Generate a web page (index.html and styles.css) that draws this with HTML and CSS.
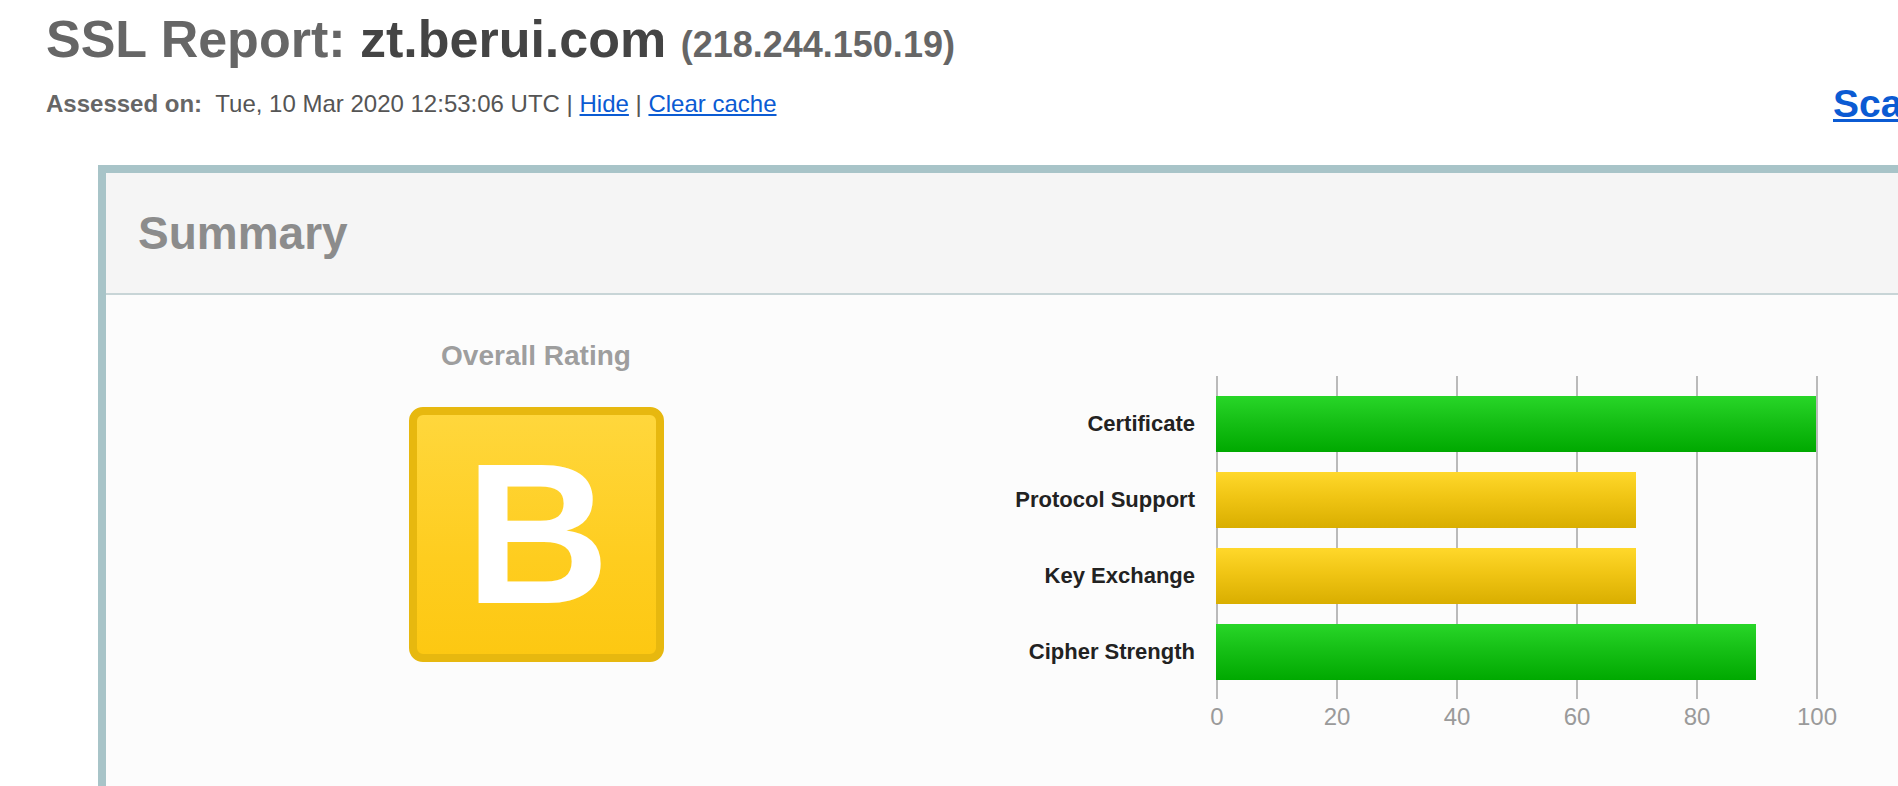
FILE: index.html
```html
<!DOCTYPE html>
<html lang="en">
<head>
<meta charset="utf-8">
<title>SSL Report: zt.berui.com</title>
<link rel="stylesheet" href="styles.css">
</head>
<body>
<div class="page">
  <h1 class="title"><span class="title-label">SSL Report:</span> <span class="host">zt.berui.com</span> <span class="ip">(218.244.150.19)</span></h1>
  <div class="meta-row">
    <div class="assessed"><b class="assessed-label">Assessed on:</b> Tue, 10 Mar 2020 12:53:06 UTC | <a href="#">Hide</a> | <a href="#">Clear cache</a></div>
    <a class="scan" href="#">Scan Another &raquo;</a>
  </div>
  <section class="report">
    <div class="report-head"><h2 class="report-title">Summary</h2></div>
    <div class="report-body">
      <div class="rating">
        <div class="rating-title">Overall Rating</div>
        <div class="grade"><span class="grade-letter">B</span></div>
      </div>
      <div class="chart">
        <div class="chart-labels">
          <div class="chart-label">Certificate</div>
          <div class="chart-label">Protocol Support</div>
          <div class="chart-label">Key Exchange</div>
          <div class="chart-label">Cipher Strength</div>
        </div>
        <div class="chart-area">
          <div class="plot">
            <div class="bars">
              <div class="bar bar-green" style="width:100%"></div>
              <div class="bar bar-yellow" style="width:70%"></div>
              <div class="bar bar-yellow" style="width:70%"></div>
              <div class="bar bar-green" style="width:90%"></div>
            </div>
          </div>
          <div class="axis">
            <span>0</span><span>20</span><span>40</span><span>60</span><span>80</span><span>100</span>
          </div>
        </div>
      </div>
    </div>
  </section>
</div>
</body>
</html>
```

FILE: styles.css
```css
html, body {
  margin: 0;
  padding: 0;
  background: #ffffff;
  overflow: hidden;
}

body {
  font-family: "Liberation Sans", Arial, Helvetica, sans-serif;
  color: #555555;
}

.page {
  padding: 10px 0 0 46px;
  width: 2200px;
}

.title {
  margin: 0;
  font-size: 52px;
  line-height: 58px;
  font-weight: bold;
  color: #666666;
  white-space: nowrap;
}

.host {
  color: #444444;
}

.ip {
  font-size: 36px;
  color: #666666;
}

.meta-row {
  display: flex;
  align-items: flex-start;
}

.assessed {
  flex: 0 0 1787px;
  margin-top: 16px;
  font-size: 24px;
  line-height: 28px;
  color: #555555;
  white-space: nowrap;
}

.assessed-label {
  color: #666666;
  margin-right: 7px;
}

.assessed a {
  color: #0b5bd3;
  text-decoration: underline;
}

.scan {
  margin-top: 8px;
  font-size: 39px;
  line-height: 44px;
  font-weight: bold;
  color: #0b5bd3;
  text-decoration: underline;
  white-space: nowrap;
}

.report {
  margin: 39px 0 0 52px;
  width: 2000px;
  border: 8px solid #a8c4c8;
  border-bottom: none;
  border-right: none;
}

.report-head {
  background: #f5f5f5;
  padding: 34px 30px 34px 32px;
  border-bottom: 2px solid #c8d5d7;
}

.report-title {
  margin: 0;
  font-size: 46px;
  line-height: 52px;
  font-weight: bold;
  color: #8c8c8c;
}

.report-body {
  background: #fcfcfc;
  display: flex;
  align-items: flex-start;
  min-height: 600px;
}

.rating {
  width: 860px;
  display: flex;
  flex-direction: column;
  align-items: center;
  padding-top: 45px;
}

.rating-title {
  font-size: 28px;
  line-height: 32px;
  font-weight: bold;
  color: #9e9e9e;
}

.grade {
  margin-top: 35px;
  width: 239px;
  height: 239px;
  border: 8px solid #e7b80f;
  border-radius: 14px;
  background: linear-gradient(to bottom, #ffd73c 0%, #fecd1f 60%, #fdc812 100%);
  display: flex;
  align-items: center;
  justify-content: center;
}

.grade-letter {
  font-size: 200px;
  line-height: 200px;
  font-weight: bold;
  color: #ffffff;
  margin-left: 3px;
  margin-top: -2px;
}

.chart {
  display: flex;
  align-items: flex-start;
  padding-top: 81px;
}

.chart-labels {
  width: 229px;
  padding-top: 20px;
  display: flex;
  flex-direction: column;
  gap: 20px;
}

.chart-label {
  height: 56px;
  display: flex;
  align-items: center;
  justify-content: flex-end;
  font-size: 22px;
  font-weight: bold;
  color: #222222;
  white-space: nowrap;
}

.chart-area {
  margin-left: 21px;
}

.plot {
  width: 602px;
  padding: 20px 0 19px 0;
  background: repeating-linear-gradient(to right, #bababa 0, #bababa 2px, transparent 2px, transparent 120px);
}

.bars {
  width: 600px;
  display: flex;
  flex-direction: column;
  gap: 20px;
}

.bar {
  height: 56px;
}

.bar-green {
  background: linear-gradient(to bottom, #28d628 0%, #16c016 45%, #00a900 100%);
}

.bar-yellow {
  background: linear-gradient(to bottom, #ffd82b 0%, #f0c514 45%, #d9ae00 100%);
}

.axis {
  display: flex;
  margin: 4px 0 0 -59px;
}

.axis span {
  width: 120px;
  text-align: center;
  font-size: 24px;
  line-height: 28px;
  color: #9a9a9a;
}
```
